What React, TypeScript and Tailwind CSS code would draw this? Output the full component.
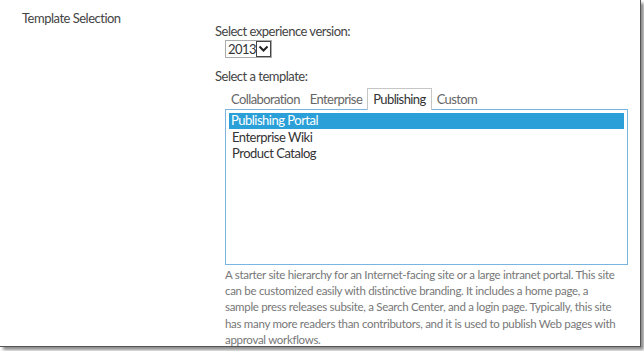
import React from 'react';

const tabs = ['Collaboration', 'Enterprise', 'Publishing', 'Custom'];
const templates = ['Publishing Portal', 'Enterprise Wiki', 'Product Catalog'];

export default function App() {
  const selectedTab = 'Publishing';

  return (
    <div className="w-[644px] h-[351px] bg-white overflow-hidden" style={{ fontFamily: 'Lato, "Noto Sans", sans-serif' }}>
      <div className="w-[641px] h-[347px] flex border-r border-b border-[#555] shadow-[3px_3px_3px_rgba(0,0,0,0.45)]">
        {/* Section title */}
        <div className="w-[215px] pl-[22px] pt-[9px] text-[13px] tracking-[-0.5px] text-[#444]">Template Selection</div>

        {/* Section body */}
        <div className="flex-1 pt-[23px] text-[13px] tracking-[-0.5px] text-[#444]">
          <div className="leading-[16px]">Select experience version:</div>

          <div className="mt-[1px] ml-[10px] flex items-center gap-[2px] h-[18px] w-[47px] border border-[#ababab] bg-white">
            <span className="pl-[2px] w-[28px] text-[13px] leading-[16px] text-[#333]">2013</span>
            <span className="w-[17px] h-[16px] border border-[#444] flex items-center justify-center">
              <svg width="11" height="8" viewBox="0 0 11 8">
                <path d="M1.5 1.5 L5.5 5.5 L9.5 1.5" fill="none" stroke="#222" strokeWidth="2" />
              </svg>
            </span>
          </div>

          <div className="mt-[10px] leading-[16px]">Select a template:</div>

          <div className="ml-[10px] mt-[4px] w-[403px]">
            <div className="flex items-end pl-[1px] h-[21px] tracking-[-0.6px]">
              {tabs.map((t) => (
                <div
                  key={t}
                  className={
                    t === selectedTab
                      ? 'px-[5px] h-[22px] leading-[21px] border border-b-0 border-[#c6c6c6] bg-white text-[#333] relative top-[1px] z-10'
                      : 'px-[5px] h-[20px] leading-[20px] text-[#666]'
                  }
                >
                  {t}
                </div>
              ))}
            </div>
            <div className="h-[156px] border border-[#7ab4e0] p-[3px]">
              {templates.map((t, i) => (
                <div
                  key={t}
                  className={
                    i === 0
                      ? 'h-[16px] leading-[15px] pl-[2px] bg-[#2a9fd8] text-white'
                      : 'h-[16px] leading-[16px] pl-[3px] text-[#333]'
                  }
                >
                  {t}
                </div>
              ))}
            </div>
          </div>

          <p className="ml-[10px] mt-[2px] w-[404px] text-[11.5px] tracking-[-0.3px] leading-[16.2px] text-[#777] whitespace-nowrap">
            A starter site hierarchy for an Internet-facing site or a large intranet portal. This site
            <br />
            can be customized easily with distinctive branding. It includes a home page, a
            <br />
            sample press releases subsite, a Search Center, and a login page. Typically, this site
            <br />
            has many more readers than contributors, and it is used to publish Web pages with
            <br />
            approval workflows.
          </p>
        </div>
      </div>
    </div>
  );
}
